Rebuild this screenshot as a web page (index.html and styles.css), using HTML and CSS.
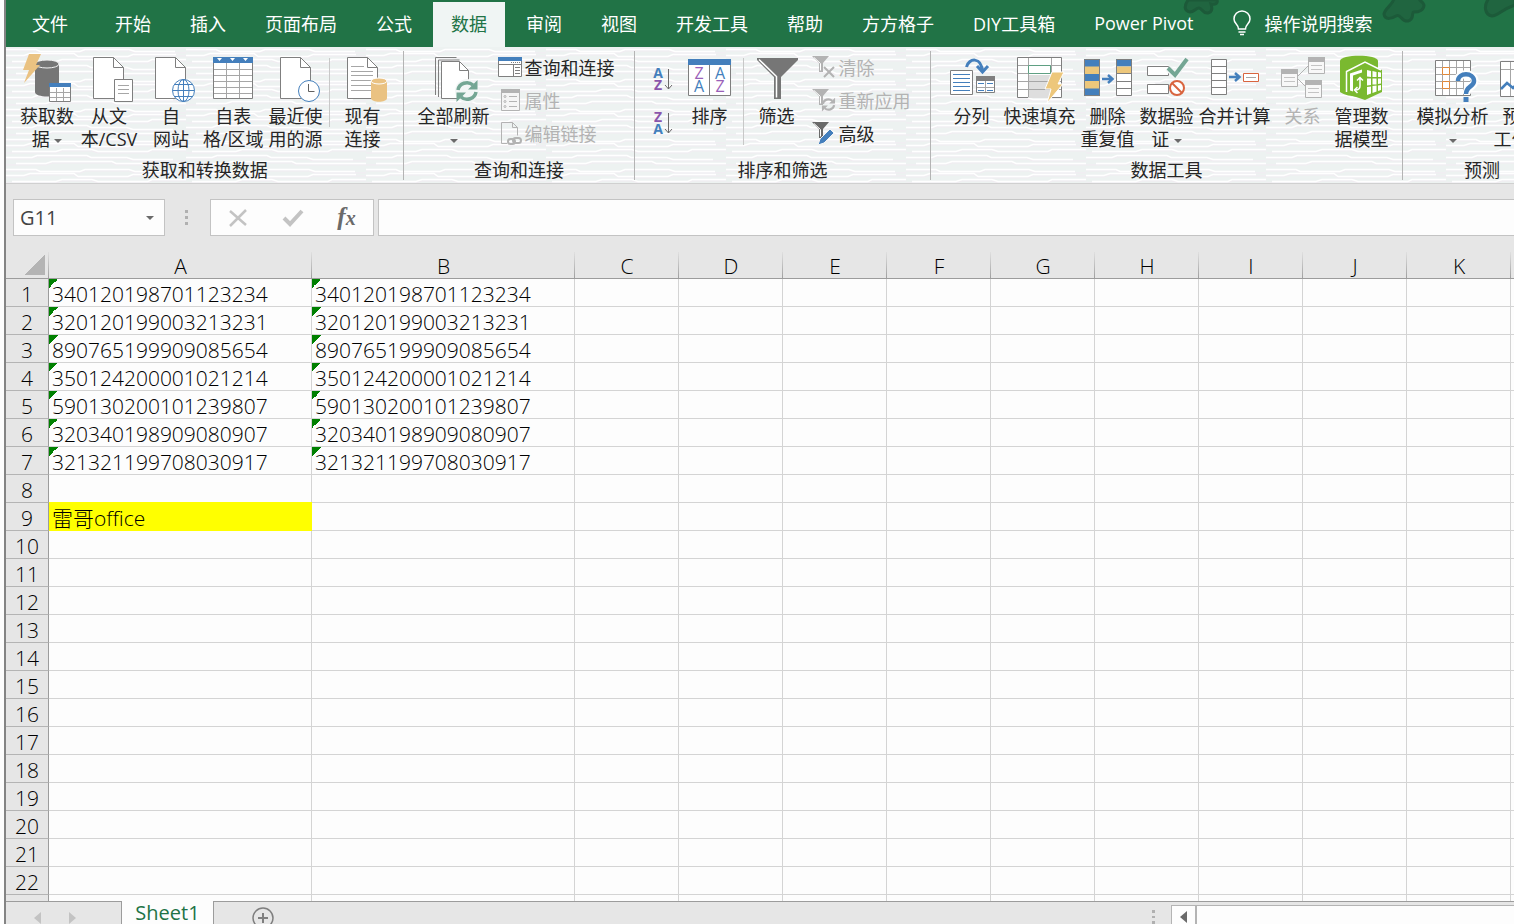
FILE: index.html
```
<!DOCTYPE html>
<html lang="zh-CN">
<head>
    <meta charset="UTF-8">
    <meta name="viewport" content="width=device-width, initial-scale=1.0">
    <title>Sheet1 - Excel</title>
    <link rel="stylesheet" href="styles.css">
</head>
<body>

    <!-- Shared icon parts -->
    <svg class="defs" width="0" height="0">
        <symbol id="doc" viewBox="0 0 54 50">
            <path d="M11.5 3.5h20l10 10v31h-30z" fill="#fff" stroke="#7f7f7f"/>
            <path d="M31.5 3.5v10h10" fill="none" stroke="#7f7f7f"/>
        </symbol>
        <symbol id="arrow" viewBox="0 0 13 10">
            <path d="M0 5h10M6 1l4.500 4-4.500 4" fill="none" stroke="#447fbc" stroke-width="2.500"/>
        </symbol>
        <symbol id="refresh" viewBox="0 0 24 24">
            <path d="M3 11a9 8.500 0 0 1 15-5M21 13a9 8.500 0 0 1-15 5" fill="none" stroke="currentColor" stroke-width="3.500"/>
            <path d="M22.500 1v9.500h-9.500zM1.500 23v-9.500h9.500z" fill="currentColor"/>
        </symbol>
        <symbol id="funnel" viewBox="0 0 24 24">
            <path d="M0 1h17l-6 7v9h-4v-9z" fill="currentColor"/>
            <path d="M2 2.500l6.500 6v7" fill="none" stroke="#fff"/>
        </symbol>
    </svg>

    <div class="window">
        <header class="tabs">
            <svg class="doodles" width="340" height="47" viewBox="0 0 340 47">
                <g fill="#206540" stroke="#1c5a39" stroke-width="3">
                    <path d="M14 0c-4 6-4 11 2 12 4 0 6-4 9-4s4 6 9 5 4-6 3-9c5 1 7-1 6-4z"/>
                    <path d="M220-2c0 6-9 10-10 16 1 7 9 4 12 2 5-3 5 6 12 5 7-2 3-9 6-9 5 0 10-2 10-7-1-4-6-4-5-8z"/>
                    <path d="M315-2c-6 8-4 17 3 18 6 0 10-7 23-11V-2z"/>
                </g>
            </svg>
            <nav class="tab-list">
                <button class="tab file-tab">文件</button>
                <button class="tab">开始</button>
                <button class="tab">插入</button>
                <button class="tab">页面布局</button>
                <button class="tab">公式</button>
                <button class="tab active">数据</button>
                <button class="tab">审阅</button>
                <button class="tab">视图</button>
                <button class="tab">开发工具</button>
                <button class="tab">帮助</button>
                <button class="tab">方方格子</button>
                <button class="tab">DIY工具箱</button>
                <button class="tab">Power Pivot</button>
            </nav>
            <button class="tell-me">
                <svg width="18" height="26" viewBox="0 0 18 26" fill="none" stroke="#fff" stroke-width="1.500"><path d="M5.500 19c0-5-4.500-5-4.500-10a8 8 0 0 1 16 0c0 5-4.500 5-4.500 10zM5.500 22h7M7 24.500h4"/></svg>
                操作说明搜索
            </button>
        </header>

        <div class="ribbon">
            <section class="group">
                <div class="tools">
                    <button class="tool">
                        <svg width="54" height="50" viewBox="0 0 54 50">
                            <path d="M15 10v28c0 6 24 6 24 0v-28z" fill="#767676"/>
                            <ellipse cx="27" cy="10" rx="12" ry="4" fill="#767676" stroke="#f4f4f4"/>
                            <path d="M9 0h12l-5 11h4l-16 18 5-13h-6z" fill="#eac282"/>
                            <path d="M29.500 30.500h21v17h-21z" fill="#fff" stroke="#7f7f7f"/>
                            <path d="M36.500 34v13M43.500 34v13M30 38.500h20M30 43.500h20" stroke="#a6a6a6"/>
                            <path d="M29 29h22v4h-22z" fill="#447fbc"/>
                        </svg>
                        <span>获取数<br>据 <i class="caret"></i></span>
                    </button>
                    <button class="tool wide">
                        <svg width="54" height="50" viewBox="0 0 54 50">
                            <use href="#doc"/>
                            <path d="M32.500 25.500h18v22h-18z" fill="#fff" stroke="#7f7f7f"/>
                            <path d="M36 31.500h11M36 35.500h11M36 39.500h11" stroke="#a6a6a6"/>
                        </svg>
                        <span>从文<br>本/CSV</span>
                    </button>
                    <button class="tool">
                        <svg width="54" height="50" viewBox="0 0 54 50">
                            <use href="#doc"/>
                            <g fill="none" stroke="#447fbc">
                                <circle cx="39.500" cy="36.500" r="11" fill="#fff"/>
                                <ellipse cx="39.500" cy="36.500" rx="5.500" ry="11"/>
                                <path d="M39.500 25.500v22M28.500 36.500h22M31 30.500h17M31 42.500h17"/>
                            </g>
                        </svg>
                        <span>自<br>网站</span>
                    </button>
                    <button class="tool wide">
                        <svg width="54" height="50" viewBox="0 0 54 50">
                            <path d="M7.500 3.500h39v41h-39z" fill="#fff" stroke="#7f7f7f"/>
                            <path d="M20.500 9v35M33.500 9v35M8 15.500h38M8 21.500h38M8 27.500h38M8 33.500h38M8 39.500h38" stroke="#a6a6a6"/>
                            <path d="M7 3h40v6h-40z" fill="#447fbc"/>
                            <path d="M11 4h5l-2.500 3zM24 4h5l-2.500 3zM37 4h5l-2.500 3z" fill="#fff"/>
                        </svg>
                        <span>自表<br>格/区域</span>
                    </button>
                    <button class="tool">
                        <svg width="54" height="50" viewBox="0 0 54 50">
                            <use href="#doc"/>
                            <circle cx="40" cy="37" r="10.500" fill="#fff" stroke="#447fbc"/>
                            <path d="M39.500 30v7.500h6" fill="none" stroke="#606060"/>
                        </svg>
                        <span>最近使<br>用的源</span>
                    </button>
                    <div class="divider"></div>
                    <button class="tool">
                        <svg width="54" height="50" viewBox="0 0 54 50">
                            <use href="#doc"/>
                            <path d="M15 12.500h13M15 17.500h22M15 21.500h22M15 26.500h20M15 31.500h20M15 36.500h20" stroke="#a6a6a6"/>
                            <path d="M35 27v17c0 5 16 5 16 0v-17z" fill="#eac282"/>
                            <ellipse cx="43" cy="27" rx="8" ry="3" fill="#eac282" stroke="#fff"/>
                        </svg>
                        <span>现有<br>连接</span>
                    </button>
                </div>
                <h2>获取和转换数据</h2>
            </section>

            <section class="group">
                <div class="tools">
                    <button class="tool">
                        <svg width="54" height="50" viewBox="0 0 54 50">
                            <path d="M8.500 41v-37.500h21M11.500 43v-37h21" fill="none" stroke="#7f7f7f"/>
                            <path d="M14.500 7.500h18l9 9v28h-27z" fill="#fff" stroke="#7f7f7f"/>
                            <path d="M32.500 7.500v9h9" fill="none" stroke="#7f7f7f"/>
                            <circle cx="40" cy="37" r="12" fill="#f3f6f6"/>
                            <use href="#refresh" x="28" y="25" width="24" height="24" color="#74a694"/>
                        </svg>
                        <span>全部刷新<br><i class="caret"></i></span>
                    </button>
                    <div class="stack">
                        <button class="small-tool">
                            <svg width="24" height="24" viewBox="0 0 24 24">
                                <path d="M.5 2.500h23v19h-23z" fill="#fff" stroke="#7f7f7f"/>
                                <path d="M0 2h24v4h-24z" fill="#447fbc"/>
                                <path d="M0 9.500h24M15.500 10v11" stroke="#7f7f7f"/>
                                <path d="M13 7.500h9" stroke="#7f7f7f" stroke-dasharray="1 1"/>
                                <path d="M17 12.500h5M17 15.500h5M17 18.500h5" stroke="#7f7f7f"/>
                            </svg>
                            查询和连接
                        </button>
                        <button class="small-tool" disabled>
                            <svg width="24" height="24" viewBox="0 0 24 24">
                                <path d="M3.500 1.500h18v21h-18z" fill="#f5f5f5" stroke="#b3b3b3"/>
                                <path d="M3 1h19v4h-19z" fill="#b3b3b3"/>
                                <path d="M11 8.500h8M11 13.500h8M11 18.500h8" stroke="#b3b3b3"/>
                                <g fill="none" stroke="#b3b3b3"><circle cx="7" cy="8.500" r="1"/><circle cx="7" cy="13.500" r="1"/><circle cx="7" cy="18.500" r="1"/></g>
                            </svg>
                            属性
                        </button>
                        <button class="small-tool" disabled>
                            <svg width="24" height="24" viewBox="0 0 24 24">
                                <path d="M9 22.500h-5.500v-21h11l5 5v8M14.500 1.500v5h5" fill="none" stroke="#b3b3b3"/>
                                <g fill="none" stroke="#b3b3b3" stroke-width="2"><rect x="10" y="18" width="7" height="5" rx="2.500"/><rect x="15" y="17" width="8" height="5" rx="2.500"/></g>
                            </svg>
                            编辑链接
                        </button>
                    </div>
                </div>
                <h2>查询和连接</h2>
            </section>

            <section class="group">
                <div class="tools">
                    <div class="sort-stack">
                        <button class="sort" aria-label="升序">
                            <svg width="20" height="24" viewBox="0 0 20 24">
                                <text class="letter bold" x="5" y="11" fill="#447fbc">A</text>
                                <text class="letter bold" x="5" y="23" fill="#8a55ab">Z</text>
                                <path d="M15.500 2v20M12 18l3.500 4 3.500-4" fill="none" stroke="#6a6a6a"/>
                            </svg>
                        </button>
                        <button class="sort" aria-label="降序">
                            <svg width="20" height="24" viewBox="0 0 20 24">
                                <text class="letter bold" x="5" y="11" fill="#8a55ab">Z</text>
                                <text class="letter bold" x="5" y="23" fill="#447fbc">A</text>
                                <path d="M15.500 2v20M12 18l3.500 4 3.500-4" fill="none" stroke="#6a6a6a"/>
                            </svg>
                        </button>
                    </div>
                    <button class="tool">
                        <svg width="54" height="50" viewBox="0 0 54 50">
                            <path d="M5.500 5.500h42v36h-42z" fill="#fff" stroke="#7f7f7f"/>
                            <path d="M26.500 10v31" stroke="#7f7f7f"/>
                            <path d="M5 5h43v6h-43z" fill="#447fbc"/>
                            <text class="letter big" x="16" y="25" fill="#9a60b8">Z</text>
                            <text class="letter big" x="16" y="38" fill="#447fbc">A</text>
                            <text class="letter big" x="37" y="25" fill="#447fbc">A</text>
                            <text class="letter big" x="37" y="38" fill="#9a60b8">Z</text>
                        </svg>
                        <span>排序</span>
                    </button>
                    <div class="divider tall"></div>
                    <button class="tool">
                        <svg width="54" height="50" viewBox="0 0 54 50">
                            <path d="M7 4h41v2l-17 17v22h-7v-22l-17-17z" fill="#767676"/>
                            <path d="M9 5.500l17.500 17v21" fill="none" stroke="#fff" stroke-width="1.500"/>
                        </svg>
                        <span>筛选</span>
                    </button>
                    <div class="stack">
                        <button class="small-tool" disabled>
                            <svg width="24" height="24" viewBox="0 0 24 24">
                                <use href="#funnel" width="24" height="24"/>
                                <path d="M12 12l10 10M22 12l-10 10" stroke="currentColor" stroke-width="2"/>
                            </svg>
                            清除
                        </button>
                        <button class="small-tool" disabled>
                            <svg width="24" height="24" viewBox="0 0 24 24">
                                <use href="#funnel" width="24" height="24"/>
                                <use href="#refresh" x="9" y="9" width="15" height="15"/>
                            </svg>
                            重新应用
                        </button>
                        <button class="small-tool">
                            <svg width="24" height="24" viewBox="0 0 24 24">
                                <g color="#6a6a6a"><use href="#funnel" width="24" height="24"/></g>
                                <path d="M6 24l2-6 10-10 4 4-10 10z" fill="#447fbc" stroke="#f5f5f5"/>
                            </svg>
                            高级
                        </button>
                    </div>
                </div>
                <h2>排序和筛选</h2>
            </section>

            <section class="group">
                <div class="tools">
                    <button class="tool">
                        <svg width="54" height="50" viewBox="0 0 54 50">
                            <path d="M5.500 16.500h22v24h-22z" fill="#fff" stroke="#7f7f7f"/>
                            <path d="M8 20.500h17M8 24.500h17M8 28.500h17M8 32.500h17M8 36.500h17" stroke="#447fbc"/>
                            <path d="M31.500 22.500h18v16h-18z" fill="#fff" stroke="#7f7f7f"/>
                            <path d="M31 22h19v5h-19z" fill="#7f7f7f"/>
                            <path d="M40.500 27v11M32 33.500h17" stroke="#a6a6a6"/>
                            <path d="M33 29.500h6M42 29.500h6M33 36.500h6M42 36.500h6" stroke="#447fbc"/>
                            <path d="M21.500 13c2-9 15-11 16 5M32 12l5.500 6 5.500-6" fill="none" stroke="#447fbc" stroke-width="3"/>
                        </svg>
                        <span>分列</span>
                    </button>
                    <button class="tool">
                        <svg width="54" height="50" viewBox="0 0 54 50">
                            <path d="M4.500 3.500h44v40h-44z" fill="#fff" stroke="#7f7f7f"/>
                            <path d="M15 21h23v23h-23z" fill="#dedede"/>
                            <path d="M15.500 4v39M38.500 4v39M5 11.500h43M5 19.500h43M5 27.500h43M5 35.500h43" stroke="#a6a6a6"/>
                            <path d="M15.500 11.500h22v8h-22z" fill="#fff" stroke="#5fa083"/>
                            <path d="M39 18h12l-6 12h5l-16 19 4-14h-6z" fill="#edc77b" stroke="#fff"/>
                        </svg>
                        <span>快速填充</span>
                    </button>
                    <button class="tool">
                        <svg width="54" height="50" viewBox="0 0 54 50">
                            <path d="M3 5h16v37h-16z" fill="#447fbc"/>
                            <path d="M3 12.500h16v7.500h-16zM3 27h16v7.500h-16z" fill="#edc77b"/>
                            <path d="M35 5h16v37h-16z" fill="#fff"/>
                            <path d="M35 5h16v7.500h-16z" fill="#447fbc"/>
                            <path d="M35 12.500h16v7.500h-16z" fill="#edc77b"/>
                            <path d="M3.500 5.500h15v36h-15zM35.500 5.500h15v36h-15zM36 19.500h15M36 27.500h15M36 34.500h15" fill="none" stroke="#7f7f7f"/>
                            <use href="#arrow" x="21" y="20" width="13" height="10"/>
                        </svg>
                        <span>删除<br>重复值</span>
                    </button>
                    <button class="tool">
                        <svg width="54" height="50" viewBox="0 0 54 50">
                            <path d="M7.500 12.500h21v9h-21zM7.500 30.500h21v9h-21z" fill="#fff" stroke="#7f7f7f"/>
                            <path d="M28 14l7 7 12-16" fill="none" stroke="#f3f6f6" stroke-width="7"/>
                            <path d="M28 14l7 7 12-16" fill="none" stroke="#74a694" stroke-width="4"/>
                            <circle cx="37" cy="34" r="7" fill="#fff" stroke="#d9643f" stroke-width="2"/>
                            <path d="M32 29l10 10" stroke="#d9643f" stroke-width="2"/>
                        </svg>
                        <span>数据验<br>证 <i class="caret"></i></span>
                    </button>
                    <button class="tool">
                        <svg width="54" height="50" viewBox="0 0 54 50">
                            <path d="M3.500 5.500h15v35h-15zM3.500 12.500h15M3.500 19.500h15M3.500 26.500h15M3.500 33.500h15" fill="#fff" stroke="#7f7f7f"/>
                            <use href="#arrow" x="21" y="18" width="13" height="10"/>
                            <path d="M35.500 19.500h15v8h-15z" fill="#fff" stroke="#d9643f"/>
                            <path d="M38 23.500h10" stroke="#a6a6a6"/>
                        </svg>
                        <span>合并计算</span>
                    </button>
                    <button class="tool" disabled>
                        <svg width="54" height="50" viewBox="0 0 54 50">
                            <path d="M22 22l10-10M22 25l8 8" stroke="#b3b3b3"/>
                            <path d="M5.500 15.500h16v17h-16zM32.500 3.500h16v16h-16zM29.500 26.500h16v17h-16z" fill="#f8f8f8" stroke="#b3b3b3"/>
                            <path d="M5 15h17v5h-17zM32 3h17v5h-17zM29 26h17v5h-17z" fill="#b3b3b3"/>
                            <path d="M8 23.500h11M8 27.500h11M35 11.500h11M35 15.500h11M32 34.500h11M32 38.500h11" stroke="#c4c4c4"/>
                        </svg>
                        <span>关系</span>
                    </button>
                    <button class="tool">
                        <svg width="54" height="50" viewBox="0 0 54 50">
                            <path d="M5 7c0-7 38-7 38 0v31c-8 6-30 6-38 0z" fill="#7ab92f"/>
                            <path d="M12 17l18-9 17 8v22l-17 8-18-6z" fill="#7ab92f"/>
                            <path d="M11.500 38v-20.500l18.500-9.500 16 8" fill="none" stroke="#fff" stroke-width="1.500"/>
                            <path d="M32 16l4 1v6l-4-.5zM37.500 17l4 1v5h-4zM43 18l3 .5v4.500h-3zM32 24.500h4v6.500l-4 .5zM37.500 24.500h4v6h-4zM43 24.500h3v5l-3 .5zM32 33l4-.5v7l-4 1.500zM37.500 32l4-.5v6l-4 1.500zM43 31.500l3-.5v5l-3 1z" fill="#fff"/>
                            <path d="M15 19.500l12-4v3l-9 3v16l-3-1z" fill="#fff"/>
                            <path d="M25 24v8c0 3-2 4-5 4M22 26.500l3-3 3 3M22.500 33l-3 3 3 3" fill="none" stroke="#fff" stroke-width="1.500"/>
                        </svg>
                        <span>管理数<br>据模型</span>
                    </button>
                </div>
                <h2>数据工具</h2>
            </section>

            <section class="group">
                <div class="tools">
                    <button class="tool">
                        <svg width="54" height="50" viewBox="0 0 54 50">
                            <path d="M9.500 6.500h35v35h-35z" fill="#fff" stroke="#7f7f7f"/>
                            <path d="M16.500 7v34M23.500 7v34M30.500 7v34M37.500 7v34M10 13.500h34M10 20.500h34M10 27.500h34M10 34.500h34" stroke="#a6a6a6"/>
                            <path d="M16.500 13.500h7v7h-7zM16.500 27.500h7v7h-7z" fill="#fff" stroke="#e0883a"/>
                            <path d="M31.500 27c0-9 17-9 17 0 0 6-8 5-8 13" fill="none" stroke="#fff" stroke-width="8"/>
                            <path d="M32 27c0-9 16-9 16 0 0 6-8 5-8 13" fill="none" stroke="#447fbc" stroke-width="4.500"/>
                            <path d="M37.500 43h5v5h-5z" fill="#447fbc"/>
                        </svg>
                        <span>模拟分析<br><i class="caret"></i></span>
                    </button>
                    <button class="tool">
                        <svg width="54" height="50" viewBox="0 0 54 50">
                            <path d="M6.500 7.500h40v35h-40z" fill="#fff" stroke="#7f7f7f"/>
                            <path d="M16.500 8v34M7 15.500h39" stroke="#a6a6a6"/>
                            <path d="M7 35l6-6 6 5 8-9 8 5 10-10" fill="none" stroke="#447fbc" stroke-width="2.500"/>
                        </svg>
                        <span>预测<br>工作表</span>
                    </button>
                </div>
                <h2>预测</h2>
            </section>
        </div>

        <div class="formula-bar">
            <button class="name-box">G11 <i class="caret"></i></button>
            <div class="grip"><i></i><i></i><i></i></div>
            <div class="formula-buttons">
                <button aria-label="取消"><svg width="20" height="20" viewBox="0 0 20 20" fill="none" stroke="#c3c3c3" stroke-width="2.500"><path d="M2 3l16 14M18 2L2 18"/></svg></button>
                <button aria-label="输入"><svg width="20" height="20" viewBox="0 0 20 20" fill="none" stroke="#c3c3c3" stroke-width="4"><path d="M1 10l6 6L19 3"/></svg></button>
                <button class="fx">f<small>x</small></button>
            </div>
            <input class="formula" type="text" aria-label="编辑栏">
        </div>

        <main class="sheet">
            <table>
                <colgroup>
                    <col class="col-num"><col class="col-id"><col class="col-id">
                    <col class="col"><col class="col"><col class="col"><col class="col"><col class="col"><col class="col"><col class="col"><col class="col"><col class="col"><col class="col">
                </colgroup>
                <thead>
                    <tr><th class="corner"></th><th>A</th><th>B</th><th>C</th><th>D</th><th>E</th><th>F</th><th>G</th><th>H</th><th>I</th><th>J</th><th>K</th><th></th></tr>
                </thead>
                <tbody>
                    <tr><th>1</th><td class="text">340120198701123234</td><td class="text">340120198701123234</td><td></td><td></td><td></td><td></td><td></td><td></td><td></td><td></td><td></td><td></td></tr>
                    <tr><th>2</th><td class="text">320120199003213231</td><td class="text">320120199003213231</td><td></td><td></td><td></td><td></td><td></td><td></td><td></td><td></td><td></td><td></td></tr>
                    <tr><th>3</th><td class="text">890765199909085654</td><td class="text">890765199909085654</td><td></td><td></td><td></td><td></td><td></td><td></td><td></td><td></td><td></td><td></td></tr>
                    <tr><th>4</th><td class="text">350124200001021214</td><td class="text">350124200001021214</td><td></td><td></td><td></td><td></td><td></td><td></td><td></td><td></td><td></td><td></td></tr>
                    <tr><th>5</th><td class="text">590130200101239807</td><td class="text">590130200101239807</td><td></td><td></td><td></td><td></td><td></td><td></td><td></td><td></td><td></td><td></td></tr>
                    <tr><th>6</th><td class="text">320340198909080907</td><td class="text">320340198909080907</td><td></td><td></td><td></td><td></td><td></td><td></td><td></td><td></td><td></td><td></td></tr>
                    <tr><th>7</th><td class="text">321321199708030917</td><td class="text">321321199708030917</td><td></td><td></td><td></td><td></td><td></td><td></td><td></td><td></td><td></td><td></td></tr>
                    <tr><th>8</th><td></td><td></td><td></td><td></td><td></td><td></td><td></td><td></td><td></td><td></td><td></td><td></td></tr>
                    <tr><th>9</th><td class="marked">雷哥office</td><td></td><td></td><td></td><td></td><td></td><td></td><td></td><td></td><td></td><td></td><td></td></tr>
                    <tr><th>10</th><td></td><td></td><td></td><td></td><td></td><td></td><td></td><td></td><td></td><td></td><td></td><td></td></tr>
                    <tr><th>11</th><td></td><td></td><td></td><td></td><td></td><td></td><td></td><td></td><td></td><td></td><td></td><td></td></tr>
                    <tr><th>12</th><td></td><td></td><td></td><td></td><td></td><td></td><td></td><td></td><td></td><td></td><td></td><td></td></tr>
                    <tr><th>13</th><td></td><td></td><td></td><td></td><td></td><td></td><td></td><td></td><td></td><td></td><td></td><td></td></tr>
                    <tr><th>14</th><td></td><td></td><td></td><td></td><td></td><td></td><td></td><td></td><td></td><td></td><td></td><td></td></tr>
                    <tr><th>15</th><td></td><td></td><td></td><td></td><td></td><td></td><td></td><td></td><td></td><td></td><td></td><td></td></tr>
                    <tr><th>16</th><td></td><td></td><td></td><td></td><td></td><td></td><td></td><td></td><td></td><td></td><td></td><td></td></tr>
                    <tr><th>17</th><td></td><td></td><td></td><td></td><td></td><td></td><td></td><td></td><td></td><td></td><td></td><td></td></tr>
                    <tr><th>18</th><td></td><td></td><td></td><td></td><td></td><td></td><td></td><td></td><td></td><td></td><td></td><td></td></tr>
                    <tr><th>19</th><td></td><td></td><td></td><td></td><td></td><td></td><td></td><td></td><td></td><td></td><td></td><td></td></tr>
                    <tr><th>20</th><td></td><td></td><td></td><td></td><td></td><td></td><td></td><td></td><td></td><td></td><td></td><td></td></tr>
                    <tr><th>21</th><td></td><td></td><td></td><td></td><td></td><td></td><td></td><td></td><td></td><td></td><td></td><td></td></tr>
                    <tr><th>22</th><td></td><td></td><td></td><td></td><td></td><td></td><td></td><td></td><td></td><td></td><td></td><td></td></tr>
                    <tr><th></th><td></td><td></td><td></td><td></td><td></td><td></td><td></td><td></td><td></td><td></td><td></td><td></td></tr>
                </tbody>
            </table>
        </main>

        <footer class="sheet-bar">
            <div class="sheet-nav">
                <button aria-label="上一个"><svg width="8" height="12" viewBox="0 0 8 12"><path d="M7 0v12L0 6z" fill="#c3c3c3"/></svg></button>
                <button aria-label="下一个"><svg width="8" height="12" viewBox="0 0 8 12"><path d="M1 0v12l7-6z" fill="#c3c3c3"/></svg></button>
            </div>
            <button class="sheet-tab">Sheet1</button>
            <div class="sheet-rest">
                <button aria-label="新工作表"><svg width="22" height="22" viewBox="0 0 22 22" fill="none" stroke="#7f7f7f"><circle cx="11" cy="11" r="10" stroke-width="1.500"/><path d="M11 6v10M6 11h10" stroke-width="2"/></svg></button>
            </div>
            <div class="scroll-area">
                <div class="grip"><i></i><i></i><i></i></div>
                <div class="scrollbar">
                    <button aria-label="向左滚动"><svg width="8" height="12" viewBox="0 0 8 12"><path d="M7 0v12L0 6z" fill="#6a6a6a"/></svg></button>
                </div>
            </div>
        </footer>
    </div>

</body>
</html>
```
FILE: styles.css
```
* {
    box-sizing: border-box;
}

body {
    margin: 0;
    padding-left: 4px;
    background-color: #fdfdfd;
    font-family: "Open Sans", "Noto Sans CJK SC", sans-serif;
    font-size: 18px;
    color: #262626;
    overflow: hidden;
}

button {
    font: inherit;
    color: inherit;
    background: none;
    border: none;
    padding: 0;
    margin: 0;
    white-space: nowrap;
}

button:disabled {
    color: #b3b3b3;
}

svg {
    display: block;
    flex-shrink: 0;
    overflow: visible;
}

.defs {
    position: absolute;
}

.window {
    display: flex;
    flex-direction: column;
    height: 100vh;
    border-left: 2px solid #848484;
    background-color: #e6e6e6;
    overflow: hidden;
}

/* Tabs */
.tabs {
    position: relative;
    display: flex;
    flex-shrink: 0;
    height: 47px;
    background-color: #217346;
    color: #fff;
}

.doodles {
    position: absolute;
    top: 0;
    right: 0;
    overflow: hidden;
}

.tab-list {
    display: flex;
    gap: 3px;
    padding-top: 2px;
    padding-left: 8px;
}

.tab {
    padding: 0 18px 4px;
}

.file-tab {
    margin-right: 8px;
}

.tab.active {
    background-color: #f0f5f4;
    color: #217346;
}

.tell-me {
    position: relative;
    display: flex;
    align-items: center;
    gap: 14px;
    margin-left: 21px;
    padding-bottom: 2px;
}

/* Ribbon */
.ribbon {
    display: flex;
    flex-shrink: 0;
    height: 137px;
    padding: 4px 0 3px;
    background-color: #edf2f1;
    background-image: url("data:image/svg+xml,%3Csvg xmlns='http://www.w3.org/2000/svg' width='180' height='30' fill='none'%3E%3Cpath stroke='%23f2ebf2' d='M0 4h30l4 2h40l5-2h44l6 2h51M0 10h18l6-2h44l4 3h50l5-2h53M0 16h50l6-2h30l6 2h50l4-2h34M0 22h26l5-2h50l4 2h36l6 2h53M0 28h40l6-2h60l4 2h70'/%3E%3Cpath stroke='%23fff' stroke-width='1.500' d='M0 2.500h30l4 2h40l5-2h44l6 2h40M0 8.500h18l6-2h44l4 3h50l5-2h43M6 14.500h44l6-2h30l6 2h50l4-2h34M0 20.500h26l5-2h50l4 2h36l6 2h40M10 26.500h30l6-2h60l4 2h70'/%3E%3C/svg%3E");
    border-bottom: 1px solid #d0d0d0;
    overflow: hidden;
}

.group {
    display: flex;
    flex-direction: column;
    flex-shrink: 0;
    justify-content: space-between;
    padding: 0 13px 0 14px;
    border-right: 1px solid #b4b4b4;
}

.group h2 {
    margin: 0;
    font-size: 18px;
    font-weight: 400;
    line-height: 20px;
    text-align: center;
}

.tools {
    display: flex;
    align-items: flex-start;
    gap: 5px;
}

.tool {
    display: flex;
    flex-direction: column;
    align-items: center;
    gap: 1px;
    min-width: 54px;
    padding-top: 3px;
    line-height: 23px;
}

.tool.wide {
    min-width: 60px;
}

.caret {
    display: inline-block;
    border: 4px solid transparent;
    border-top-color: #6a6a6a;
    border-bottom: none;
    vertical-align: middle;
}

.divider {
    width: 1px;
    height: 69px;
    margin: 7px 1px 0;
    background-color: #c8c8c8;
}

.divider.tall {
    height: 87px;
}

.stack {
    display: flex;
    flex-direction: column;
    margin-left: 3px;
}

.small-tool {
    display: flex;
    align-items: center;
    gap: 3px;
    height: 33px;
    padding-right: 6px;
    padding-bottom: 1px;
}

.sort-stack {
    display: flex;
    flex-direction: column;
    padding-top: 6px;
}

.sort {
    display: flex;
    align-items: center;
    justify-content: center;
    width: 29px;
    height: 44px;
}

.letter {
    font-size: 14px;
    text-anchor: middle;
}

.letter.bold {
    font-weight: 700;
}

.letter.big {
    font-size: 16px;
}

/* Formula bar */
.formula-bar {
    display: flex;
    flex-shrink: 0;
    align-items: stretch;
    height: 68px;
    padding: 15px 0 16px 7px;
}

.name-box {
    display: flex;
    align-items: center;
    justify-content: space-between;
    width: 152px;
    padding: 0 10px 0 6px;
    background-color: #fdfdfd;
    border: 1px solid #c3c3c3;
    font-size: 20px;
    color: #444;
}

.grip {
    display: flex;
    flex-direction: column;
    justify-content: center;
    gap: 3px;
    padding: 0 20px;
}

.grip i {
    width: 3px;
    height: 3px;
    background-color: #b0b0b0;
}

.formula-buttons {
    display: flex;
    align-items: center;
    justify-content: space-around;
    width: 164px;
    margin-left: 2px;
    background-color: #fdfdfd;
    border: 1px solid #c3c3c3;
}

.fx {
    font-family: "Liberation Serif", serif;
    font-size: 25px;
    font-style: italic;
    font-weight: 700;
    line-height: 25px;
    color: #6a6a6a;
}

.fx small {
    font-size: 20px;
}

.formula {
    flex: 1;
    min-width: 0;
    margin-left: 4px;
    background-color: #fdfdfd;
    border: 1px solid #c3c3c3;
    border-right: none;
    font: inherit;
}

/* Cells */
.sheet {
    flex: 1;
    min-height: 0;
    background-color: #fdfdfd;
    overflow: hidden;
}

table {
    width: 1609px;
    table-layout: fixed;
    border-collapse: separate;
    border-spacing: 0;
    font-size: 21px;
    color: #000;
}

.col-num {
    width: 43px;
}

.col-id {
    width: 263px;
}

.col {
    width: 104px;
}

th,
td {
    height: 28px;
    padding: 2px 3px 0;
    border-right: 1px solid #d4d4d4;
    border-bottom: 1px solid #d4d4d4;
    font-weight: 300;
    line-height: 24px;
    text-align: left;
    white-space: nowrap;
}

th {
    background-color: #e6e6e6;
    border-right-color: #9c9c9c;
    border-bottom-color: #b4b4b4;
    text-align: center;
}

thead th {
    height: 27px;
    border-right: none;
    border-bottom-color: #9c9c9c;
    background-image: linear-gradient(#e0e0e0, #a0a0a0);
    background-position: right;
    background-size: 1px 100%;
    background-repeat: no-repeat;
    line-height: 24px;
}

thead .corner {
    background-image: linear-gradient(#e0e0e0, #a0a0a0), linear-gradient(135deg, transparent 50%, #b4b4b4 50%);
    background-position: right, 19px 3px;
    background-size: 1px 100%, 20px 20px;
}

.text {
    background: linear-gradient(135deg, #008000 50%, transparent 50%) left top / 9px 9px no-repeat;
}

.marked {
    background-color: #ff0;
    border-color: #ff0;
    box-shadow: 0 -1px #ff0;
}

/* Sheet tabs */
.sheet-bar {
    display: flex;
    flex-shrink: 0;
    height: 23px;
}

.sheet-nav {
    display: flex;
    align-items: flex-end;
    gap: 26px;
    width: 115px;
    padding: 0 28px;
    border-top: 1px solid #9c9c9c;
}

.sheet-tab {
    width: 93px;
    background-color: #fdfdfd;
    border: 1px solid #9c9c9c;
    border-width: 0 1px;
    font-size: 20px;
    line-height: 23px;
    color: #217346;
}

.sheet-rest {
    flex: 1;
    padding: 5px 0 0 38px;
    border-top: 1px solid #9c9c9c;
    overflow: hidden;
}

.scroll-area {
    display: flex;
    width: 24%;
    padding-top: 3px;
    border-top: 1px solid #9c9c9c;
    overflow: hidden;
}

.scroll-area .grip {
    padding: 5px 16px 0 0;
    justify-content: flex-start;
}

.scrollbar {
    flex: 1;
    background-color: #fdfdfd;
    border: 1px solid #b4b4b4;
    border-width: 1px 0 0 1px;
}

.scrollbar button {
    display: flex;
    align-items: center;
    justify-content: center;
    width: 25px;
    height: 22px;
    border-right: 2px solid #b4b4b4;
}
```
